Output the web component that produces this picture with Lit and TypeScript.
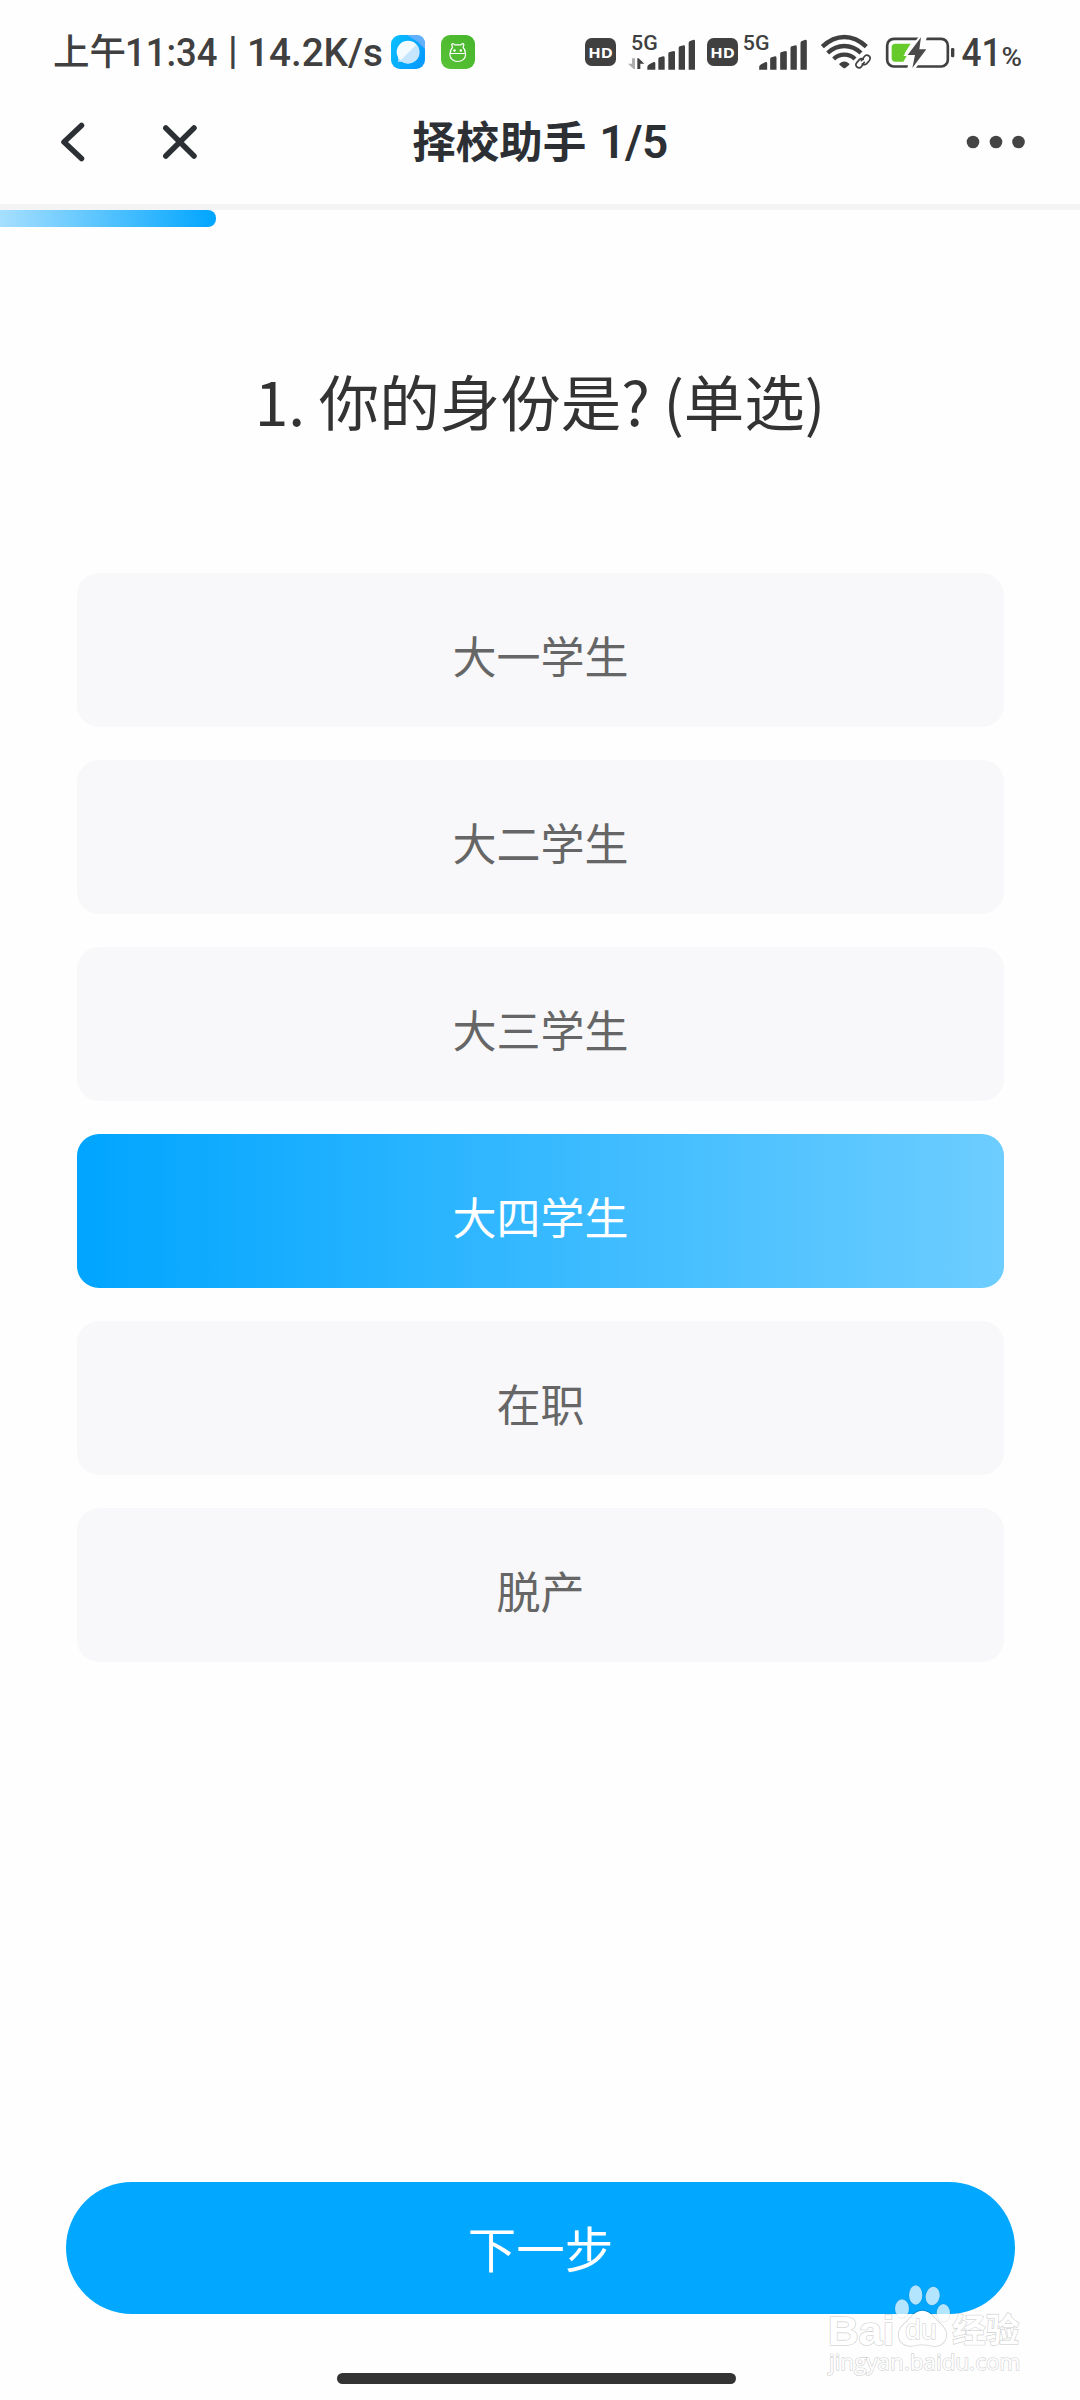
import { LitElement, html, svg, css } from "lit";
import { customElement, property, state } from "lit/decorators.js";
import { classMap } from "lit/directives/class-map.js";

@customElement("status-bar")
class StatusBar extends LitElement {
  static styles = css`
    :host {
      display: flex;
      align-items: center;
      box-sizing: border-box;
      height: 80px;
      padding: 24px 58px 0 53px;
      color: #404040;
    }
    svg { display: block; flex: none; overflow: visible; }
    .clock { margin-right: 8px; fill: #404040; }
    .zh { font: 500 36.5px "Noto Sans CJK SC", sans-serif; }
    .num { font: 500 39px Roboto, sans-serif; }
    .app { margin-right: 16px; }
    .spacer { flex: 1; }
    .hd { margin-right: 12px; }
    .hd.tight { margin-right: 6px; }
    .sig { margin-right: 12px; }
    .sig2 { margin-right: 14px; }
    .wifi { margin-right: 15px; }
    .level { margin-left: 7px; fill: #404040; }
    .pct { font: 500 25px Roboto, sans-serif; }
    .hdt { font: 700 45px "Open Sans", sans-serif; fill: #fff; }
    .gen { font: 500 60px Roboto, sans-serif; fill: #404040; }
  `;

  private hd(tight = false) {
    return html`<svg class=${classMap({ hd: true, tight })} width="31" height="28" viewBox="46 53 93 84">
      <rect x="46" y="53" width="93" height="84" rx="20" fill="#404040" />
      <text class="hdt" x="56" y="112" textLength="74" lengthAdjust="spacingAndGlyphs">HD</text>
    </svg>`;
  }

  private bars() {
    return svg`<g fill="#404040">
      <path d="M232 143v-8q0-5 6-8l13-7q5-1 5 4v19z" />
      <path d="M265 143v-32q0-4 4-5l11-3q4 0 4 4v36z" />
      <path d="M295 143v-48q0-4 4-5l12-3q4 0 4 4v52z" />
      <path d="M326 143v-65q0-4 4-5l11-3q4 0 4 4v69z" />
      <path d="M356 143v-80q0-4 4-6l11-4q4 0 4 4v86z" />
    </g>`;
  }

  render() {
    return html`
      <svg class="clock" width="330" height="56" viewBox="53 24 330 56">
        <text class="zh" x="53" y="65">上午</text>
        <text class="num" x="125" y="66" textLength="92.500" lengthAdjust="spacingAndGlyphs">11:34</text>
        <text class="num" x="228" y="64">|</text>
        <text class="num" x="247" y="66" textLength="136" lengthAdjust="spacingAndGlyphs">14.2K/s</text>
      </svg>
      <svg class="app" width="34" height="34" viewBox="0 0 34 34">
        <defs>
          <linearGradient id="sky" x1="0" y1="0" x2="1" y2=".5">
            <stop offset="0" stop-color="#08c0ff" /><stop offset="1" stop-color="#069cff" />
          </linearGradient>
          <linearGradient id="leaf" x1="1" y1="0" x2="0" y2="1">
            <stop offset="0" stop-color="#46b42b" /><stop offset="1" stop-color="#5ac337" />
          </linearGradient>
        </defs>
        <rect width="34" height="34" rx="9" fill="url(#sky)" />
        <path d="M16 0h9q9 0 9 9v5L27 7z" fill="#62b0fb" />
        <path d="M7 18v9h9z" fill="#9cdcff" />
        <circle cx="17" cy="17" r="11.3" fill="#f3fbff" />
        <path d="M28.200 15A11.300 11.300 0 0 1 9.500 25.500L25.500 9.500Q28 12 28.200 15z" fill="#c5e6fd" />
      </svg>
      <svg width="34" height="34" viewBox="0 0 34 34">
        <rect width="34" height="34" rx="9" fill="url(#leaf)" />
        <g fill="none" stroke="#fff" stroke-width="1.2" stroke-linejoin="round">
          <path d="M9 18.500h15.500v1.500a7.750 6.500 0 0 1-15.500 0z" />
          <path d="M9.200 18.500q0-4 2.300-6l-.8-3q1-2 3 .3h6.200q2-2.300 3-.3l-.8 3q2.300 2 2.300 6" />
        </g>
        <circle cx="13.500" cy="15.500" r="1.200" fill="#fff" />
        <circle cx="19.800" cy="15.500" r="1.200" fill="#fff" />
      </svg>
      <div class="spacer"></div>
      ${this.hd()}
      <svg class="sig" width="67" height="36" viewBox="174 36 201 108">
        <text class="gen" x="183" y="83" textLength="80" lengthAdjust="spacingAndGlyphs">5G</text>
        ${this.bars()}
        <path d="M195 109v32h-4l-17-16h12v-16z" fill="#aeaeae" />
        <path d="M202 141v-32h4l17 16h-12v16z" fill="#404040" />
      </svg>
      ${this.hd(true)}
      <svg class="sig2" width="63" height="36" viewBox="523 36 188 108">
        <text class="gen" x="519" y="83" textLength="80" lengthAdjust="spacingAndGlyphs">5G</text>
        <g transform="translate(336 0)">${this.bars()}</g>
      </svg>
      <svg class="wifi" width="50" height="36" viewBox="32 44 150 108">
        <g fill="none" stroke="#404040" stroke-width="13">
          <path d="M36 82Q67 53 102 53T168 82" />
          <path d="M52 101Q74 80 102 80T152 101" />
          <path d="M70 119Q83 106 102 106T134 119" />
        </g>
        <path d="M87 133q15-13 30 0v3l-12 10q-3 2-6 0l-12-10z" fill="#404040" />
        <path d="M153 133l12-18 12 8-14 14z" fill="none" stroke="#fefefe" stroke-width="13" stroke-linecap="round" />
        <g fill="none" stroke="#404040" stroke-width="5" stroke-linecap="round">
          <path d="M153 124l8-11q7-9 15-3 7 6 0 15l-7 8q-6 6-13 1" />
          <path d="M162 129l-8 12q-7 8-14 2-7-6 0-14l7-8q6-6 12-1" />
        </g>
      </svg>
      <svg width="69" height="31" viewBox="228 49 207 93">
        <rect x="231.500" y="54.500" width="182" height="83" rx="20" fill="none" stroke="#404040" stroke-width="8" />
        <rect x="423" y="82" width="10" height="28" rx="4" fill="#404040" />
        <path d="M256 69H302L283 99H294L280 123H256Q245 123 245 112V80Q245 69 256 69z" fill="#65ca2a" />
        <path d="M329 45L280 106H302L291 145H315L360 86H340L352 45z" fill="#fefefe" />
        <path d="M333 50L293 103H315L307 142L349 86H328z" fill="#4a4a4a" />
      </svg>
      <svg class="level" width="60" height="56" viewBox="962 24 60 56">
        <text class="num" x="961.500" y="66" textLength="40" lengthAdjust="spacingAndGlyphs">41</text>
        <text class="pct" x="1001.500" y="66" textLength="20.500" lengthAdjust="spacingAndGlyphs">%</text>
      </svg>
    `;
  }
}

@customElement("nav-header")
class NavHeader extends LitElement {
  @property() heading = "";
  @property() progress = "";

  static styles = css`
    :host {
      display: grid;
      grid-template-columns: 1fr auto 1fr;
      align-items: center;
      box-sizing: border-box;
      height: 130px;
      padding: 0 59px;
      border-bottom: 6px solid #f4f4f4;
      color: #2c3034;
      font-family: "Noto Sans CJK SC", sans-serif;
    }
    svg { display: block; overflow: visible; }
    .left { display: flex; align-items: center; gap: 76px; }
    .title {
      display: flex;
      align-items: baseline;
      gap: 13px;
      padding-bottom: 2px;
      font-size: 43.5px;
      font-weight: 700;
      line-height: 64px;
      white-space: nowrap;
    }
    .count { font-family: Roboto, sans-serif; font-size: 46px; font-weight: 600; letter-spacing: -0.5px; }
    .more { justify-self: end; margin-right: -5px; }
  `;

  render() {
    return html`
      <div class="left">
        <svg width="26" height="40" viewBox="0 0 26 40" fill="none" stroke="#2c3034" stroke-width="5.500" stroke-linecap="round" stroke-linejoin="round">
          <path d="M22.500 3.500L5 20l17.500 16.500" />
        </svg>
        <svg width="36" height="36" viewBox="0 0 36 36" fill="none" stroke="#2c3034" stroke-width="5.500" stroke-linecap="round">
          <path d="M4.800 4L33 32M33 4L4.800 32" />
        </svg>
      </div>
      <div class="title"><span>${this.heading}</span><span class="count">${this.progress}</span></div>
      <svg class="more" width="59" height="14" viewBox="0 0 59 14" fill="#444">
        <circle cx="6" cy="7" r="6.300" /><circle cx="29" cy="7" r="6.300" /><circle cx="51.500" cy="7" r="6.300" />
      </svg>
    `;
  }
}

@customElement("site-watermark")
class SiteWatermark extends LitElement {
  static styles = css`
    :host { display: block; pointer-events: none; }
    svg { display: block; overflow: visible; }
    .mark { fill: rgba(255, 255, 255, 0.7); stroke: rgba(0, 0, 0, 0.16); stroke-width: 5px; paint-order: stroke; }
    .toe { stroke-width: 2px; }
    .latin { font: 700 122px "Liberation Sans", sans-serif; }
    .du { font: 400 82px "Liberation Sans", sans-serif; }
    .cjk { font: 700 98px "Noto Sans CJK SC", sans-serif; }
    .url { font: 400 66px "Open Sans", sans-serif; }
    .over { fill: #fff; }
  `;

  render() {
    return html`<svg width="200" height="100" viewBox="132 360 600 300">
      <g class="mark toe">
        <ellipse cx="366" cy="446" rx="21" ry="28" />
        <ellipse cx="407" cy="405" rx="20" ry="29" />
        <ellipse cx="458" cy="408" rx="21" ry="28" transform="rotate(10 458 408)" />
        <ellipse cx="490" cy="459" rx="20" ry="27" />
      </g>
      <path class="mark over" d="M427 452q20 0 34 20l28 28q17 20 5 42-14 20-38 15-30-7-58 0-26 3-38-16-10-22 6-42l27-27q14-20 34-20z" />
      <text class="mark latin over" x="143" y="554" textLength="200" lengthAdjust="spacingAndGlyphs">Bai</text>
      <text class="mark du over" x="376" y="538" textLength="94" lengthAdjust="spacingAndGlyphs">du</text>
      <text class="mark cjk over" x="517" y="547" textLength="200" lengthAdjust="spacingAndGlyphs">经验</text>
      <text class="mark url over" x="147" y="631" textLength="574" lengthAdjust="spacingAndGlyphs">jingyan.baidu.com</text>
    </svg>`;
  }
}

@customElement("app-root")
class AppRoot extends LitElement {
  @state() private selected = 3;
  private readonly step = 1;
  private readonly total = 5;
  private readonly options = ["大一学生", "大二学生", "大三学生", "大四学生", "在职", "脱产"];

  static styles = css`
    :host {
      display: flex;
      flex-direction: column;
      position: relative;
      box-sizing: border-box;
      width: 1080px;
      height: 2400px;
      overflow: hidden;
      background: #fefefe;
      font-family: "Noto Sans CJK SC", sans-serif;
    }
    .track { height: 17px; flex: none; }
    .fill {
      height: 17px;
      border-radius: 0 8px 8px 0;
      background: linear-gradient(90deg, #a6dfff, #00a5ff);
    }
    .question {
      margin: 123px 0 123px;
      font-size: 60.5px;
      font-weight: 400;
      line-height: 100px;
      text-align: center;
      color: #333;
    }
    .options { display: flex; flex-direction: column; gap: 33px; padding: 0 76px 0 77px; }
    .option {
      box-sizing: border-box;
      height: 154px;
      padding: 11px 0 0;
      border: 0;
      border-radius: 22px;
      background: #f8f8fa;
      color: #666;
      font: 400 44px/143px "Noto Sans CJK SC", sans-serif;
      text-align: center;
    }
    .option.selected { background: linear-gradient(90deg, #00a5ff, #6dcdff); color: #fff; }
    .next {
      height: 132px;
      margin: auto 65px 59px 66px;
      padding: 0 0 2px;
      border: 0;
      border-radius: 66px;
      background: #02a7ff;
      color: #fff;
      font: 400 48.5px/130px "Noto Sans CJK SC", sans-serif;
    }
    .home { align-self: center; flex: none; width: 399px; height: 11px; margin-bottom: 16px; margin-right: 7px; border-radius: 6px; background: #333; }
    .watermark { position: absolute; left: 824px; top: 2280px; }
  `;

  render() {
    return html`
      <status-bar></status-bar>
      <nav-header heading="择校助手" progress="${this.step}/${this.total}"></nav-header>
      <div class="track"><div class="fill" style="width: ${(this.step / this.total) * 100}%"></div></div>
      <div class="question">1. 你的身份是? (单选)</div>
      <div class="options">
        ${this.options.map(
          (label, i) => html`<button
            class=${classMap({ option: true, selected: i === this.selected })}
            @click=${() => (this.selected = i)}
          >${label}</button>`
        )}
      </div>
      <button class="next">下一步</button>
      <div class="home"></div>
      <site-watermark class="watermark"></site-watermark>
    `;
  }
}
